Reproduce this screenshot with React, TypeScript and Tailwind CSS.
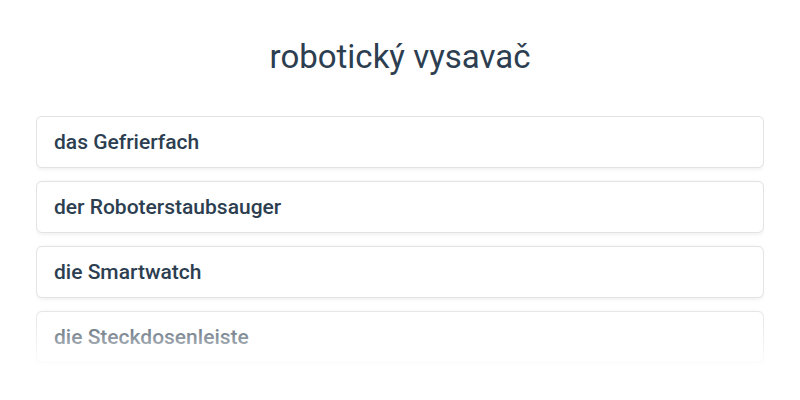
const words = ['das Gefrierfach', 'der Roboterstaubsauger', 'die Smartwatch', 'die Steckdosenleiste'];

export default function App() {
  return (
    <div className="w-[800px] h-[400px] bg-white font-['Roboto',sans-serif] text-[#2c3e50] overflow-hidden">
      <h1 className="pt-[37px] text-center text-[33px] leading-[40px] font-normal">robotický vysavač</h1>

      <div className="relative mx-[36px] mt-[39px] h-[256px] overflow-hidden">
        <div className="flex flex-col gap-[13px]">
          {words.map((w) => (
            <div
              key={w}
              className="h-[52px] shrink-0 flex items-center px-[17px] pt-px bg-white border border-[#e3e3e3] rounded-[6px] shadow-[0_1px_4px_rgba(0,0,0,0.08)] text-[21px] font-medium"
            >
              {w}
            </div>
          ))}
        </div>
        {/* fade out at the bottom */}
        <div className="absolute left-0 right-0 bottom-0 h-[75px] bg-gradient-to-b from-white/0 via-white/40 to-white pointer-events-none" />
      </div>
    </div>
  );
}
